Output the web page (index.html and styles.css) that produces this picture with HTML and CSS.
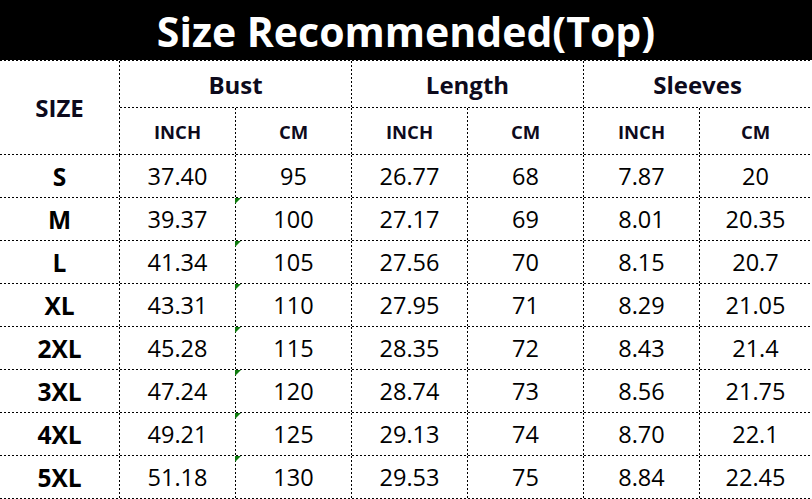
FILE: index.html
```html
<!DOCTYPE html>
<html>
<head>
<meta charset="utf-8">
<link rel="stylesheet" href="styles.css">
</head>
<body>
<div class="title">Size Recommended(Top)</div>
<div class="chart">
  <div class="cell hd size">SIZE</div>
  <div class="cell hd grp span2">Bust</div>
  <div class="cell hd grp span2">Length</div>
  <div class="cell hd grp span2 last">Sleeves</div>
  <div class="cell hd unit">INCH</div>
  <div class="cell hd unit">CM</div>
  <div class="cell hd unit">INCH</div>
  <div class="cell hd unit">CM</div>
  <div class="cell hd unit">INCH</div>
  <div class="cell hd unit last">CM</div>

  <div class="cell lbl">S</div><div class="cell">37.40</div><div class="cell">95</div><div class="cell">26.77</div><div class="cell">68</div><div class="cell">7.87</div><div class="cell last">20</div>
  <div class="cell lbl">M</div><div class="cell">39.37</div><div class="cell flag">100</div><div class="cell">27.17</div><div class="cell">69</div><div class="cell">8.01</div><div class="cell last">20.35</div>
  <div class="cell lbl">L</div><div class="cell">41.34</div><div class="cell flag">105</div><div class="cell">27.56</div><div class="cell">70</div><div class="cell">8.15</div><div class="cell last">20.7</div>
  <div class="cell lbl">XL</div><div class="cell">43.31</div><div class="cell flag">110</div><div class="cell">27.95</div><div class="cell">71</div><div class="cell">8.29</div><div class="cell last">21.05</div>
  <div class="cell lbl">2XL</div><div class="cell">45.28</div><div class="cell flag">115</div><div class="cell">28.35</div><div class="cell">72</div><div class="cell">8.43</div><div class="cell last">21.4</div>
  <div class="cell lbl">3XL</div><div class="cell">47.24</div><div class="cell flag">120</div><div class="cell">28.74</div><div class="cell">73</div><div class="cell">8.56</div><div class="cell last">21.75</div>
  <div class="cell lbl">4XL</div><div class="cell">49.21</div><div class="cell flag">125</div><div class="cell">29.13</div><div class="cell">74</div><div class="cell">8.70</div><div class="cell last">22.1</div>
  <div class="cell lbl">5XL</div><div class="cell">51.18</div><div class="cell flag">130</div><div class="cell">29.53</div><div class="cell">75</div><div class="cell">8.84</div><div class="cell last">22.45</div>
</div>
</body>
</html>
```
FILE: styles.css
```css
html, body {
  margin: 0;
  padding: 0;
  background: #fff;
}
body {
  width: 812px;
  height: 499px;
  overflow: hidden;
  font-family: "Open Sans", "Noto Sans", sans-serif;
  color: #000;
}
.title {
  height: 60px;
  background: #000;
  color: #fff;
  font-weight: 700;
  font-size: 41px;
  line-height: 62px;
  text-align: center;
}
.chart {
  display: grid;
  grid-template-columns: 120px repeat(5, 116px) 112px;
  grid-template-rows: 47px 47px repeat(8, 43px);
  background: repeating-linear-gradient(to right, #000 0 2px, transparent 2px 4px) top left / 100% 1px no-repeat;
  padding-top: 1px;
}
.cell {
  display: flex;
  align-items: center;
  justify-content: center;
  position: relative;
  font-size: 23.5px;
  background:
    repeating-linear-gradient(to right, #000 0 2px, transparent 2px 4px) bottom left / 100% 1px no-repeat,
    repeating-linear-gradient(to bottom, #000 0 2px, transparent 2px 4px) top right / 1px 100% no-repeat;
  padding: 0 1px 1px 0;
  box-sizing: border-box;
}
.cell.last {
  background:
    repeating-linear-gradient(to right, #000 0 2px, transparent 2px 4px) bottom left / 100% 1px no-repeat;
}
.hd {
  font-weight: 700;
  color: #0d0a1c;
}
.size {
  grid-row: span 2;
  font-size: 24px;
}
.span2 {
  grid-column: span 2;
}
.grp {
  font-size: 24px;
}
.unit {
  font-size: 18.5px;
}
.lbl {
  font-weight: 700;
  font-size: 24.5px;
}
.flag::before {
  content: "";
  position: absolute;
  left: -1px;
  top: 0;
  width: 0;
  height: 0;
  border-top: 6px solid #0f7b0f;
  border-right: 6px solid transparent;
}
```
